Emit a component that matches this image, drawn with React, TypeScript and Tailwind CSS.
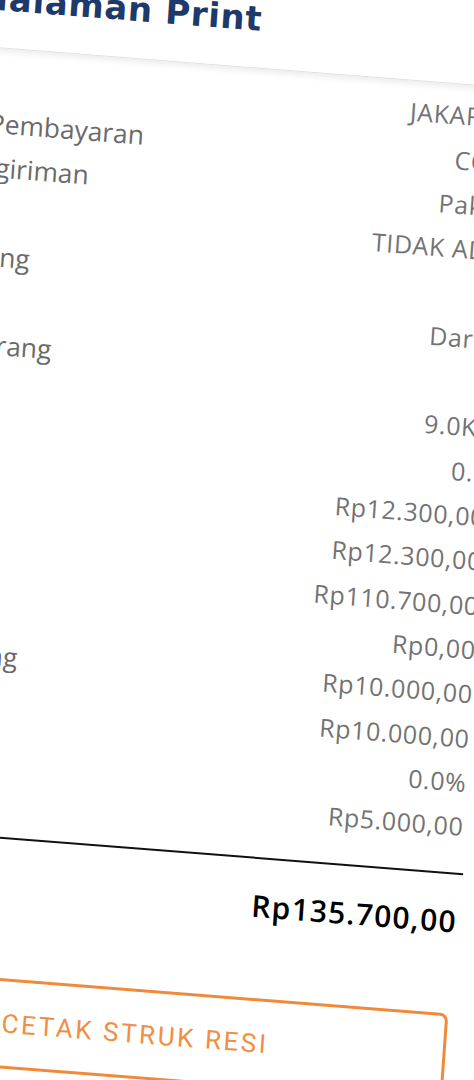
import { ArrowLeft } from 'lucide-react';

const rows = [
  { label: 'Tujuan', value: 'JAKARTA' },
  { label: 'Metode Pembayaran', value: 'COD' },
  { label: 'Jenis Pengiriman', value: 'Paket' },
  { label: 'Asuransi', value: 'TIDAK ADA' },
  { label: 'Jenis Barang', value: '-' },
  { label: 'Layanan', value: 'Darat' },
  { label: 'Jumlah Barang', value: '1' },
  { label: 'Berat', value: '9.0Kg' },
  { label: 'Volume', value: '0.0' },
  { label: 'Harga/Kg', value: 'Rp12.300,00' },
  { label: 'Tarif', value: 'Rp12.300,00' },
  { label: 'Ongkir', value: 'Rp110.700,00' },
  { label: 'Diskon', value: 'Rp0,00' },
  { label: 'Biaya Packing', value: 'Rp10.000,00' },
  { label: 'Biaya Lain', value: 'Rp10.000,00' },
  { label: 'PPN', value: '0.0%' },
  { label: 'Admin', value: 'Rp5.000,00' },
];

export default function App() {
  return (
    <div className="relative w-[474px] h-[1080px] overflow-hidden bg-white">
      <div className="absolute left-[-138.6px] top-[-77px] w-[708px] origin-top-left [transform:matrix(0.99692,0.07846,-0.06976,0.99756,0,0)] bg-white">
        <header className="relative z-10 h-[114px] px-10 pt-[44px] flex items-start gap-[52px] bg-white border-b border-[#e2e2e2] shadow-[0_3px_6px_rgba(0,0,0,0.08)]">
          <ArrowLeft className="w-8 h-8 mt-[4px] text-[#1d3a6a]" />
          <h1 className="font-['DejaVu_Sans',sans-serif] font-bold text-[34px] leading-[40px] tracking-[0.02em] text-[#1d3a6a]">
            Halaman Print
          </h1>
        </header>

        <main className="px-10 pt-[9px] pb-10">
          {rows.map((row, i) => (
            <div key={i} className="h-[44.3px] flex items-center justify-between">
              <span className="font-['Open_Sans',sans-serif] text-[26.4px] text-[#6a6a6a]">{row.label}</span>
              <span className="font-['Open_Sans',sans-serif] text-[25px] tracking-[0.025em] text-[#737373] mr-[4px]">
                {row.value}
              </span>
            </div>
          ))}

          <div className="mt-[24px] mr-[1px] h-[1.5px] bg-[#111]" />

          <div className="mt-[29px] text-right leading-[36px] font-['Open_Sans',sans-serif] font-semibold text-[30px] tracking-[0.04em] text-black mr-[4px]">
            Rp135.700,00
          </div>

          <button className="mt-[74.5px] w-[622px] h-[90px] flex items-center justify-center rounded-[8px] border-[3px] border-[#f08a3a] font-['Roboto',sans-serif] font-normal text-[26px] tracking-[0.1em] text-[#f08e44]">
            CETAK STRUK RESI
          </button>
        </main>
      </div>
    </div>
  );
}
